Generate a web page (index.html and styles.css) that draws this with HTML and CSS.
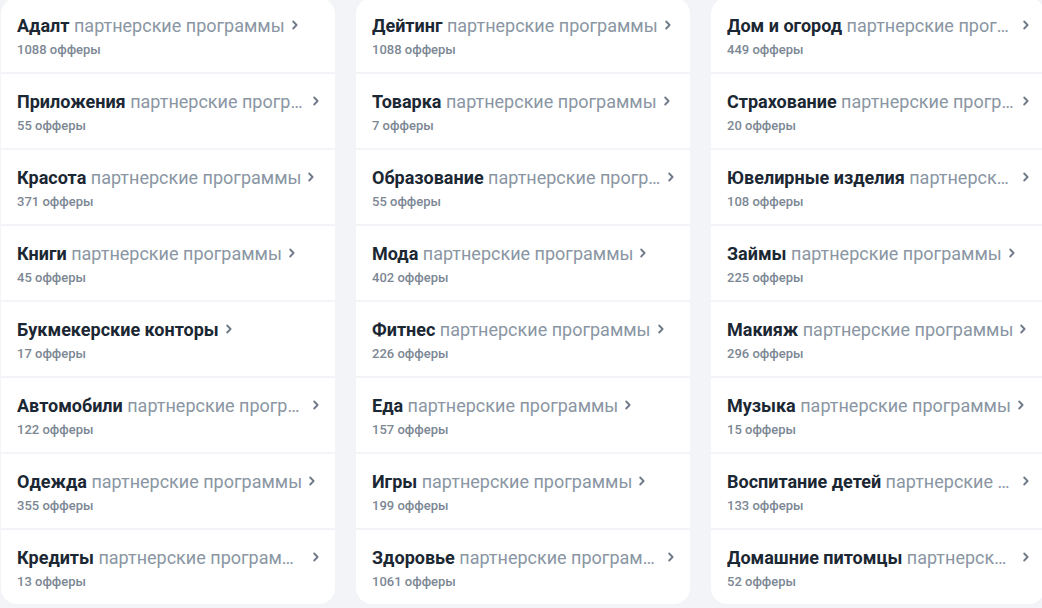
FILE: index.html
```html
<!DOCTYPE html>
<html lang="ru">
<head>
<meta charset="utf-8">
<link rel="stylesheet" href="styles.css">
</head>
<body>
<div class="grid">
  <div class="card">
    <a class="row"><div class="title"><span class="t"><b>Адалт</b> партнерские программы</span><svg class="chev" viewBox="0 0 6 10"><path d="M1.2 1.5 L4.6 5 L1.2 8.5"/></svg></div><div class="count">1088 офферы</div></a>
    <a class="row"><div class="title"><span class="t"><b>Приложения</b> партнерские программы</span><svg class="chev" viewBox="0 0 6 10"><path d="M1.2 1.5 L4.6 5 L1.2 8.5"/></svg></div><div class="count">55 офферы</div></a>
    <a class="row"><div class="title"><span class="t"><b>Красота</b> партнерские программы</span><svg class="chev" viewBox="0 0 6 10"><path d="M1.2 1.5 L4.6 5 L1.2 8.5"/></svg></div><div class="count">371 офферы</div></a>
    <a class="row"><div class="title"><span class="t"><b>Книги</b> партнерские программы</span><svg class="chev" viewBox="0 0 6 10"><path d="M1.2 1.5 L4.6 5 L1.2 8.5"/></svg></div><div class="count">45 офферы</div></a>
    <a class="row"><div class="title"><span class="t"><b>Букмекерские конторы</b></span><svg class="chev" viewBox="0 0 6 10"><path d="M1.2 1.5 L4.6 5 L1.2 8.5"/></svg></div><div class="count">17 офферы</div></a>
    <a class="row"><div class="title"><span class="t"><b>Автомобили</b> партнерские программы</span><svg class="chev" viewBox="0 0 6 10"><path d="M1.2 1.5 L4.6 5 L1.2 8.5"/></svg></div><div class="count">122 офферы</div></a>
    <a class="row"><div class="title"><span class="t"><b>Одежда</b> партнерские программы</span><svg class="chev" viewBox="0 0 6 10"><path d="M1.2 1.5 L4.6 5 L1.2 8.5"/></svg></div><div class="count">355 офферы</div></a>
    <a class="row"><div class="title"><span class="t"><b>Кредиты</b> партнерские программы</span><svg class="chev" viewBox="0 0 6 10"><path d="M1.2 1.5 L4.6 5 L1.2 8.5"/></svg></div><div class="count">13 офферы</div></a>
  </div>
  <div class="card">
    <a class="row"><div class="title"><span class="t"><b>Дейтинг</b> партнерские программы</span><svg class="chev" viewBox="0 0 6 10"><path d="M1.2 1.5 L4.6 5 L1.2 8.5"/></svg></div><div class="count">1088 офферы</div></a>
    <a class="row"><div class="title"><span class="t"><b>Товарка</b> партнерские программы</span><svg class="chev" viewBox="0 0 6 10"><path d="M1.2 1.5 L4.6 5 L1.2 8.5"/></svg></div><div class="count">7 офферы</div></a>
    <a class="row"><div class="title"><span class="t"><b>Образование</b> партнерские программы</span><svg class="chev" viewBox="0 0 6 10"><path d="M1.2 1.5 L4.6 5 L1.2 8.5"/></svg></div><div class="count">55 офферы</div></a>
    <a class="row"><div class="title"><span class="t"><b>Мода</b> партнерские программы</span><svg class="chev" viewBox="0 0 6 10"><path d="M1.2 1.5 L4.6 5 L1.2 8.5"/></svg></div><div class="count">402 офферы</div></a>
    <a class="row"><div class="title"><span class="t"><b>Фитнес</b> партнерские программы</span><svg class="chev" viewBox="0 0 6 10"><path d="M1.2 1.5 L4.6 5 L1.2 8.5"/></svg></div><div class="count">226 офферы</div></a>
    <a class="row"><div class="title"><span class="t"><b>Еда</b> партнерские программы</span><svg class="chev" viewBox="0 0 6 10"><path d="M1.2 1.5 L4.6 5 L1.2 8.5"/></svg></div><div class="count">157 офферы</div></a>
    <a class="row"><div class="title"><span class="t"><b>Игры</b> партнерские программы</span><svg class="chev" viewBox="0 0 6 10"><path d="M1.2 1.5 L4.6 5 L1.2 8.5"/></svg></div><div class="count">199 офферы</div></a>
    <a class="row"><div class="title"><span class="t"><b>Здоровье</b> партнерские программы</span><svg class="chev" viewBox="0 0 6 10"><path d="M1.2 1.5 L4.6 5 L1.2 8.5"/></svg></div><div class="count">1061 офферы</div></a>
  </div>
  <div class="card">
    <a class="row"><div class="title"><span class="t"><b>Дом и огород</b> партнерские программы</span><svg class="chev" viewBox="0 0 6 10"><path d="M1.2 1.5 L4.6 5 L1.2 8.5"/></svg></div><div class="count">449 офферы</div></a>
    <a class="row"><div class="title"><span class="t"><b>Страхование</b> партнерские программы</span><svg class="chev" viewBox="0 0 6 10"><path d="M1.2 1.5 L4.6 5 L1.2 8.5"/></svg></div><div class="count">20 офферы</div></a>
    <a class="row"><div class="title"><span class="t"><b>Ювелирные изделия</b> партнерские программы</span><svg class="chev" viewBox="0 0 6 10"><path d="M1.2 1.5 L4.6 5 L1.2 8.5"/></svg></div><div class="count">108 офферы</div></a>
    <a class="row"><div class="title"><span class="t"><b>Займы</b> партнерские программы</span><svg class="chev" viewBox="0 0 6 10"><path d="M1.2 1.5 L4.6 5 L1.2 8.5"/></svg></div><div class="count">225 офферы</div></a>
    <a class="row"><div class="title"><span class="t"><b>Макияж</b> партнерские программы</span><svg class="chev" viewBox="0 0 6 10"><path d="M1.2 1.5 L4.6 5 L1.2 8.5"/></svg></div><div class="count">296 офферы</div></a>
    <a class="row"><div class="title"><span class="t"><b>Музыка</b> партнерские программы</span><svg class="chev" viewBox="0 0 6 10"><path d="M1.2 1.5 L4.6 5 L1.2 8.5"/></svg></div><div class="count">15 офферы</div></a>
    <a class="row"><div class="title"><span class="t"><b>Воспитание детей</b> партнерские программы</span><svg class="chev" viewBox="0 0 6 10"><path d="M1.2 1.5 L4.6 5 L1.2 8.5"/></svg></div><div class="count">133 офферы</div></a>
    <a class="row"><div class="title"><span class="t"><b>Домашние питомцы</b> партнерские программы</span><svg class="chev" viewBox="0 0 6 10"><path d="M1.2 1.5 L4.6 5 L1.2 8.5"/></svg></div><div class="count">52 офферы</div></a>
  </div>
</div>
</body>
</html>
```

FILE: styles.css
```css
html, body {
  margin: 0;
  padding: 0;
  background: #f3f4f8;
  overflow: hidden;
  height: 608px;
}
body {
  font-family: Roboto, "Noto Sans", "Liberation Sans", sans-serif;
}
.grid {
  display: grid;
  grid-template-columns: 334px 334px 334px;
  column-gap: 21px;
  padding-left: 1px;
  margin-top: -2px;
  width: 1100px;
}
.card {
  background: #f3f4f8;
  border-radius: 16px;
  overflow: hidden;
  display: flex;
  flex-direction: column;
  gap: 2px;
}
.row {
  display: block;
  background: #ffffff;
  height: 74px;
  box-sizing: border-box;
  padding: 17px 16px 0 16px;
}
.title {
  display: flex;
  align-items: center;
  gap: 7px;
  height: 22px;
}
.t {
  font-size: 18px;
  line-height: 22px;
  color: #8a96a3;
  white-space: nowrap;
  overflow: hidden;
  text-overflow: ellipsis;
  min-width: 0;
}
.t b {
  color: #1b2733;
  font-weight: 700;
}
.chev {
  flex: none;
  width: 6px;
  height: 10px;
  margin-top: -2px;
}
.chev path {
  fill: none;
  stroke: #6e7a88;
  stroke-width: 1.8;
  stroke-linecap: round;
  stroke-linejoin: round;
}
.count {
  margin-top: 5px;
  font-size: 13px;
  line-height: 16px;
  font-weight: 500;
  color: #7c8794;
}
```
